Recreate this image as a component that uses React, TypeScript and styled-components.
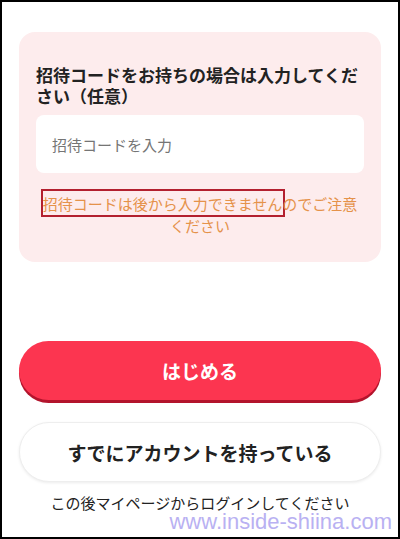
import styled, { createGlobalStyle } from 'styled-components';

const GlobalStyle = createGlobalStyle`
  * {
    box-sizing: border-box;
  }
  body {
    margin: 0;
    background: #fff;
    font-family: "Noto Sans CJK JP", "Noto Sans", sans-serif;
  }
`;

function App() {
  return (
    <>
      <GlobalStyle />
      <Screen>
        <InviteCard>
          <Title>招待コードをお持ちの場合は入力してください（任意）</Title>
          <CodeInput type="text" placeholder="招待コードを入力" />
          <Notice>
            <Marked>招待コードは後から入力できません</Marked>のでご注意ください
          </Notice>
        </InviteCard>

        <Actions>
          <Button $primary>はじめる</Button>
          <Button>すでにアカウントを持っている</Button>
          <Hint>この後マイページからログインしてください</Hint>
        </Actions>

        <Watermark>www.inside-shiina.com</Watermark>
      </Screen>
    </>
  );
}

export default App;

const Screen = styled.div`
  position: relative;
  width: 400px;
  height: 539px;
  border: 2px solid #000;
  padding: 30px 17px 0;
  overflow: hidden;
  color: #222;
`;

const InviteCard = styled.section`
  display: flex;
  flex-direction: column;
  background-color: #fdeced;
  border-radius: 16px;
  padding: 32px 17px 25px;
`;

const Title = styled.h3`
  margin: 0;
  font-size: 17px;
  line-height: 21px;
  font-weight: 700;
  color: #222;
`;

const CodeInput = styled.input`
  margin-top: 9px;
  height: 58px;
  width: 100%;
  border: none;
  border-radius: 8px;
  background: #fff;
  padding: 0 16px;
  font-family: inherit;
  font-size: 15px;
  color: #222;
  outline: none;

  ::placeholder {
    color: #ababab;
  }
`;

const Notice = styled.p`
  margin: 20px 0 0;
  text-align: center;
  font-size: 15px;
  line-height: 22px;
  color: #e5924a;
`;

const Marked = styled.span`
  border: 2px solid #b3202f;
  padding: 2px 1px 1px 0;
  margin-left: -2px;
  margin-right: -3px;
`;

const Actions = styled.div`
  display: flex;
  flex-direction: column;
  margin-top: 79px;
`;

const Button = styled.button<{ $primary?: boolean }>`
  height: ${(p) => (p.$primary ? '59px' : '60px')};
  margin-bottom: ${(p) => (p.$primary ? '22px' : '0')};
  width: 100%;
  border-radius: 30px;
  font-family: inherit;
  font-size: 19px;
  font-weight: 700;
  cursor: pointer;
  border: ${(p) => (p.$primary ? 'none' : '1px solid #eeeeee')};
  background: ${(p) => (p.$primary ? '#fc3550' : '#fff')};
  color: ${(p) => (p.$primary ? '#fff' : '#222')};
  box-shadow: ${(p) =>
    p.$primary ? '0 3px 0 #b3142c' : '0 1px 3px rgba(0, 0, 0, 0.08)'};
`;

const Hint = styled.p`
  margin: 10px 0 0;
  text-align: center;
  font-size: 15px;
  line-height: 21px;
  color: #222;
`;

const Watermark = styled.span`
  position: absolute;
  right: 6px;
  bottom: 2px;
  font-family: "Liberation Sans", Arial, sans-serif;
  font-size: 22px;
  line-height: 26px;
  color: #b9b1f2;
  pointer-events: none;
`;
